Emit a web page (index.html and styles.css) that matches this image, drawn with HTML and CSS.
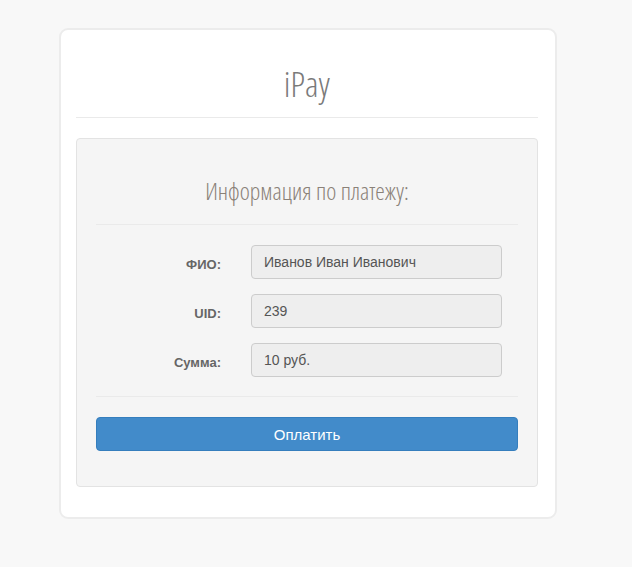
FILE: index.html
```html
<!DOCTYPE html>
<html lang="ru">
<head>
<meta charset="utf-8">
<title>iPay</title>
<link rel="stylesheet" href="styles.css">
</head>
<body>
<div class="page">
  <div class="card">
    <h1 class="brand">iPay</h1>
    <hr class="rule rule-top">
    <div class="well">
      <h2 class="well-title">Информация по платежу:</h2>
      <hr class="rule">
      <div class="form">
        <div class="row">
          <label class="label">ФИО:</label>
          <div class="field">Иванов Иван Иванович</div>
        </div>
        <div class="row">
          <label class="label">UID:</label>
          <div class="field">239</div>
        </div>
        <div class="row">
          <label class="label">Сумма:</label>
          <div class="field">10 руб.</div>
        </div>
      </div>
      <hr class="rule rule-bottom">
      <button class="btn">Оплатить</button>
    </div>
  </div>
</div>
</body>
</html>
```
FILE: styles.css
```css
html, body {
  margin: 0;
  padding: 0;
}
body {
  background: #f8f8f8;
  font-family: "Liberation Sans", Arial, sans-serif;
  font-size: 14px;
  color: #555;
}
.page {
  padding: 28px 0 0 59px;
}
.card {
  box-sizing: border-box;
  width: 498px;
  height: 491px;
  background: #fff;
  border: 2px solid #ececec;
  border-radius: 9px;
  padding: 0 17px 0 15px;
}
.brand {
  margin: 0;
  padding-top: 29px;
  height: 58px;
  box-sizing: content-box;
  font-family: "Open Sans", sans-serif;
  font-stretch: condensed;
  font-weight: 300;
  font-size: 35px;
  line-height: 50px;
  text-align: center;
  color: #7a7a7a;
}
.rule {
  border: 0;
  border-top: 1px solid #eaeaea;
  margin: 0;
}
.rule-top {
  margin-bottom: 20px;
}
.well {
  box-sizing: border-box;
  height: 349px;
  background: #f5f5f5;
  border: 1px solid #e3e3e3;
  border-radius: 4px;
  padding: 0 19px;
}
.well-title {
  margin: 0;
  padding-top: 32px;
  height: 53px;
  box-sizing: content-box;
  font-family: "Open Sans", sans-serif;
  font-stretch: condensed;
  font-weight: 300;
  font-size: 24px;
  line-height: 40px;
  text-align: center;
  color: #8a8178;
}
.form {
  padding: 20px 0 19px;
  display: flex;
  flex-direction: column;
  gap: 15px;
}
.row {
  display: grid;
  grid-template-columns: 125px 251px;
  column-gap: 30px;
  align-items: center;
}
.label {
  text-align: right;
  font-weight: bold;
  font-size: 13px;
  color: #666;
  padding-top: 4px;
}
.field {
  box-sizing: border-box;
  height: 34px;
  background: #eee;
  border: 1px solid #ccc;
  border-radius: 4px;
  padding: 0 12px;
  line-height: 32px;
  font-size: 14px;
  color: #555;
}
.rule-bottom {
  margin-bottom: 20px;
}
.btn {
  display: block;
  width: 100%;
  height: 34px;
  background: #428bca;
  border: 1px solid #357ebd;
  border-radius: 4px;
  color: #fff;
  font-family: "Liberation Sans", Arial, sans-serif;
  font-size: 15px;
  padding: 0;
}
```
